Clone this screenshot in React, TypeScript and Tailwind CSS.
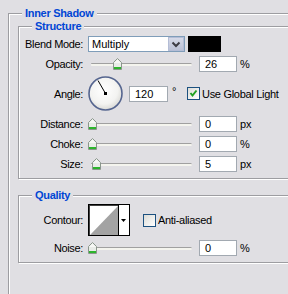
import React from "react";

const BG = "bg-[#E0DFE3]";

function Group({
  title,
  className,
  children,
}: {
  title: string;
  className?: string;
  children?: React.ReactNode;
}) {
  return (
    <div
      className={
        "flex flex-col border border-[#9D9DA1] shadow-[inset_1px_1px_0_#ffffff,1px_1px_0_#ffffff] " +
        (className || "")
      }
    >
      <div className="-mt-[8px] ml-[13px] h-[14px] self-start bg-[#E0DFE3] px-[3px] text-[11px] leading-[14px] font-bold tracking-[-0.3px] text-[#0046D5]">
        {title}
      </div>
      {children}
    </div>
  );
}

function Label({ children }: { children: React.ReactNode }) {
  return (
    <div className="w-[64px] shrink-0 text-right leading-[16px] tracking-[-0.35px]">
      {children}
    </div>
  );
}

function Thumb() {
  return (
    <svg width="9" height="12" viewBox="0 0 9 12">
      <path
        d="M4.5 0.5 L8.5 4.5 V11.5 H0.5 V4.5 Z"
        fill="#E9ECE8"
        stroke="#8A968C"
        strokeWidth="1"
      />
      <path d="M1 5 L4.5 1.5 L8 5 Z" fill="#F7F8F6" />
      <rect x="1" y="9" width="7" height="2" fill="#2CB52C" />
    </svg>
  );
}

function Slider({ left }: { left: number }) {
  return (
    <div className="relative ml-[5px] h-full w-[104px] shrink-0 pt-[7px]">
      <div className="ml-[3px] h-[3px] rounded-r-[2px] rounded-l-[1px] border-t border-[#A0A0A0] bg-[#F4F4EE]" />
      <div className="absolute top-[2px]" style={{ left }}>
        <Thumb />
      </div>
    </div>
  );
}

function NumBox({ value, w = 38 }: { value: string; w?: number }) {
  return (
    <div
      className="flex h-[16px] shrink-0 items-center border border-[#A2A9B1] bg-white pl-[5px] leading-[14px]"
      style={{ width: w }}
    >
      {value}
    </div>
  );
}

function SliderRow({
  label,
  left,
  value,
  unit,
  className,
}: {
  label: string;
  left: number;
  value: string;
  unit: string;
  className?: string;
}) {
  return (
    <div className={"flex h-[16px] items-center " + (className || "")}>
      <Label>{label}</Label>
      <Slider left={left} />
      <div className="ml-[7px]">
        <NumBox value={value} />
      </div>
      <div className="ml-[3px] leading-[14px]">{unit}</div>
    </div>
  );
}

function CheckBox({ checked }: { checked?: boolean }) {
  return (
    <div className="flex h-[13px] w-[13px] shrink-0 items-center justify-center border border-[#1C5180] bg-[linear-gradient(135deg,#DCDCD7,#FFFFFF)]">
      {checked && (
        <svg width="11" height="11" viewBox="0 0 11 11">
          <path
            d="M2.5 5 L4.5 7.5 L8.5 2.5"
            fill="none"
            stroke="#21A121"
            strokeWidth="2"
          />
        </svg>
      )}
    </div>
  );
}

function AngleDial() {
  return (
    <svg width="35" height="35" viewBox="0 0 35 35" className="shrink-0">
      <defs>
        <radialGradient id="dialg" cx="45%" cy="40%" r="60%">
          <stop offset="0%" stopColor="#FFFFFF" />
          <stop offset="70%" stopColor="#F3F3F1" />
          <stop offset="100%" stopColor="#DADAD6" />
        </radialGradient>
      </defs>
      <circle
        cx="17.5"
        cy="17.5"
        r="16.5"
        fill="url(#dialg)"
        stroke="#55658F"
        strokeWidth="1.6"
      />
      <line
        x1="17.5"
        y1="17.5"
        x2="10"
        y2="4.5"
        stroke="#000"
        strokeWidth="1"
      />
      <rect x="16" y="16" width="3" height="3" fill="#000" />
    </svg>
  );
}

function ContourBox() {
  return (
    <svg width="42" height="32" viewBox="0 0 42 32" className="shrink-0">
      <rect x="0.5" y="0.5" width="41" height="31" fill="#FFFFFF" stroke="#000" />
      <line x1="1.5" y1="1" x2="1.5" y2="31" stroke="#404040" />
      <line x1="1" y1="1.5" x2="30" y2="1.5" stroke="#404040" />
      <polygon points="2,31 30,2 30,31" fill="#A3A3A3" />
      <line x1="30.5" y1="1" x2="30.5" y2="31" stroke="#000" />
      <polygon points="33,15 38,15 35.5,18" fill="#000" />
    </svg>
  );
}

export default function App() {
  return (
    <div
      className={
        "h-[294px] w-[288px] overflow-hidden pl-[8px] pt-[13px] text-[11px] text-black [font-family:'Liberation_Sans',Arial,sans-serif] " +
        BG
      }
    >
      <Group title="Inner Shadow" className="h-[320px] w-[300px]">
        <Group title="Structure" className="ml-[9px] mt-[6px] w-[290px] pb-[6px]">
          <div className="mt-[3px] flex h-[16px] items-center">
            <Label>Blend Mode:</Label>
            <div className="ml-[5px] flex h-[16px] w-[97px] shrink-0 border border-[#7F9DB9] bg-white">
              <div className="flex-1 pl-[3px] leading-[14px]">Multiply</div>
              <div className="flex h-full w-[16px] items-center justify-center border border-[#B4BDD6] bg-[linear-gradient(#D6DAE8,#BCC2D6)]">
                <svg width="10" height="7" viewBox="0 0 10 7">
                  <path
                    d="M1.5 1.5 L5 5 L8.5 1.5"
                    fill="none"
                    stroke="#3C3C44"
                    strokeWidth="2"
                  />
                </svg>
              </div>
            </div>
            <div className="ml-[3px] h-[16px] w-[33px] bg-black" />
          </div>

          <SliderRow className="mt-[4px]" label="Opacity:" left={25} value="26" unit="%" />

          <div className="mt-[4px] flex h-[35px] items-center">
            <Label>Angle:</Label>
            <div className="ml-[5px]">
              <AngleDial />
            </div>
            <div className="ml-[6px]">
              <NumBox value="120" w={39} />
            </div>
            <div className="ml-[4px] w-[15px] self-start pt-[10px] leading-[10px]">°</div>
            <CheckBox checked />
            <div className="ml-[2px] leading-[14px] tracking-[-0.3px]">Use Global Light</div>
          </div>

          <SliderRow className="mt-[5px]" label="Distance:" left={0} value="0" unit="px" />
          <SliderRow className="mt-[4px]" label="Choke:" left={0} value="0" unit="%" />
          <SliderRow className="mt-[4px]" label="Size:" left={4} value="5" unit="px" />
        </Group>

        <Group title="Quality" className="ml-[9px] mt-[16px] w-[290px] pb-[6px]">
          <div className="mt-[2px] flex h-[32px] items-center">
            <Label>Contour:</Label>
            <div className="ml-[5px]">
              <ContourBox />
            </div>
            <div className="ml-[13px]">
              <CheckBox />
            </div>
            <div className="ml-[2px] leading-[14px] tracking-[-0.3px]">Anti-aliased</div>
          </div>
          <SliderRow className="mt-[4px]" label="Noise:" left={0} value="0" unit="%" />
        </Group>
      </Group>
    </div>
  );
}
